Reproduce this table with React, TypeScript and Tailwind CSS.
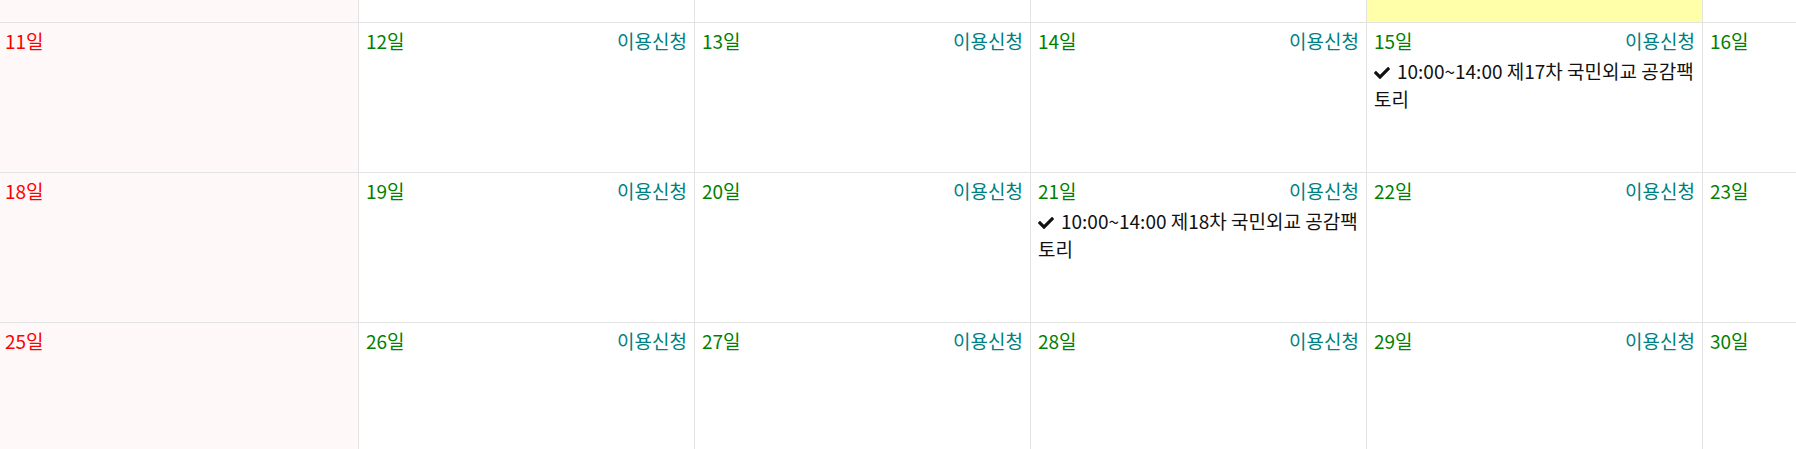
import { FaCheck } from 'react-icons/fa'

type Day = {
  day: number
  sunday?: boolean
  event?: string
}

const weeks: Day[][] = [
  [
    { day: 11, sunday: true },
    { day: 12 },
    { day: 13 },
    { day: 14 },
    { day: 15, event: '10:00~14:00 제17차 국민외교 공감팩토리' },
    { day: 16 },
  ],
  [
    { day: 18, sunday: true },
    { day: 19 },
    { day: 20 },
    { day: 21, event: '10:00~14:00 제18차 국민외교 공감팩토리' },
    { day: 22 },
    { day: 23 },
  ],
  [
    { day: 25, sunday: true },
    { day: 26 },
    { day: 27 },
    { day: 28 },
    { day: 29 },
    { day: 30 },
  ],
]

function DayCell({ d, last }: { d: Day; last: boolean }) {
  if (d.sunday) {
    return (
      <div className="w-[359px] shrink-0 border-r border-b border-[#e3e3e3] bg-[#fff8f8] pl-[5px] pt-[4px]">
        <span className="text-[#ff0000]">{d.day}일</span>
      </div>
    )
  }
  return (
    <div className="w-[336px] shrink-0 border-r border-b border-[#e3e3e3] bg-white pl-[7px] pr-[7px] pt-[4px]">
      <div className="flex justify-between">
        <span className="text-[#008000]">{d.day}일</span>
        {!last && <span className="text-[#008080]">이용신청</span>}
      </div>
      {d.event && (
        <div className="mt-[2px] text-[#111]">
          <FaCheck className="inline-block w-[16px] h-[16px] mr-[7px] align-[-2px]" />
          {d.event}
        </div>
      )}
    </div>
  )
}

export default function App() {
  return (
    <div
      className="w-[1796px] h-[449px] overflow-hidden bg-white text-[19px] leading-[28px]"
      style={{ fontFamily: '"Noto Sans CJK KR", "Noto Sans", sans-serif' }}
    >
      <div className="w-[2400px]">
        {/* previous week (cut off) */}
        <div className="flex h-[23px]">
          <div className="w-[359px] shrink-0 border-r border-b border-[#e3e3e3] bg-[#fff8f8]" />
          <div className="w-[336px] shrink-0 border-r border-b border-[#e3e3e3]" />
          <div className="w-[336px] shrink-0 border-r border-b border-[#e3e3e3]" />
          <div className="w-[336px] shrink-0 border-r border-b border-[#e3e3e3]" />
          <div className="w-[336px] shrink-0 border-r border-b border-[#e3e3e3] bg-[#ffffaa]" />
          <div className="w-[336px] shrink-0 border-r border-b border-[#e3e3e3]" />
        </div>

        {weeks.map((w, i) => (
          <div key={i} className="flex h-[150px]">
            {w.map((d, j) => (
              <DayCell key={d.day} d={d} last={j === w.length - 1} />
            ))}
          </div>
        ))}
      </div>
    </div>
  )
}
